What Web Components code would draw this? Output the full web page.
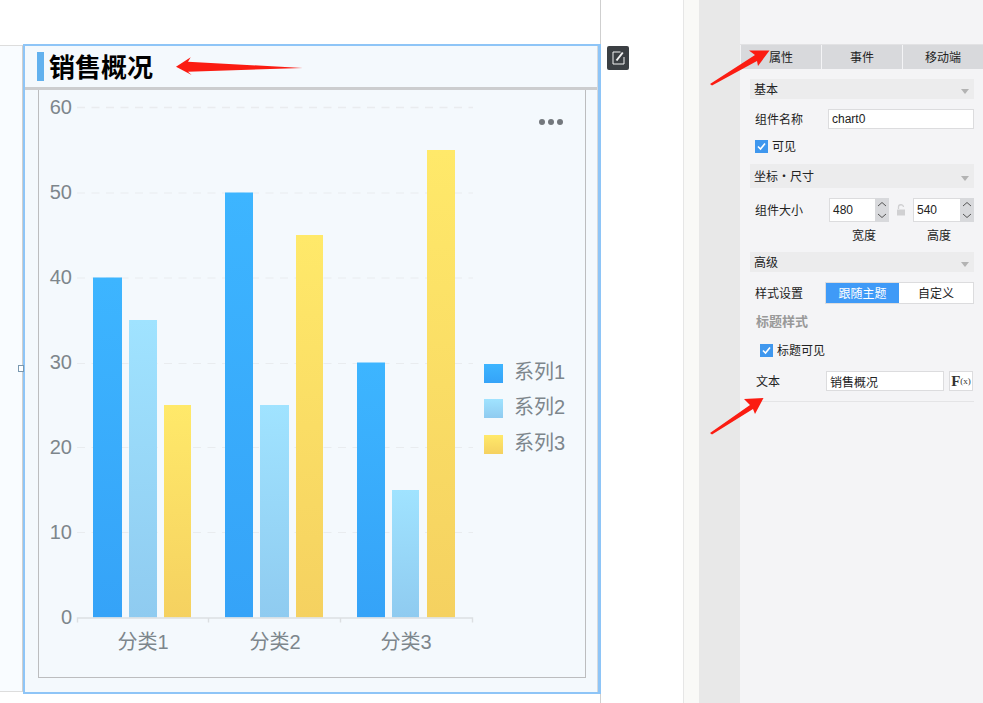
<!DOCTYPE html>
<html lang="zh">
<head>
<meta charset="utf-8">
<style>
html, body { margin: 0; height: 100%; overflow: hidden; background: #fff; }
body { font: 12px "Liberation Sans", "Noto Sans CJK SC", sans-serif; color: #222; }
</style>
</head>
<body>
<report-designer></report-designer>

<script>
const FONT = '"Liberation Sans", "Noto Sans CJK SC", sans-serif'

function tpl(html) {
    const t = document.createElement('template')
    t.innerHTML = html
    return t
}

class SimpleEl extends HTMLElement {
    connectedCallback() {
        if (this.shadowRoot) return
        this.attachShadow({ mode: 'open' })
        this.shadowRoot.appendChild(this.constructor.template.content.cloneNode(true))
        if (this.setup) this.setup()
    }
}

// the bar chart is a free canvas, so everything is placed in svg coords
class BarChart extends SimpleEl {
    static template = tpl(`
    <style>
        :host { display: block; flex: 1; min-height: 0; }
        svg { display: block; width: 100%; height: 100%; }
        text { font-family: ${FONT}; fill: #7d868c; }
    </style>
    <svg xmlns="http://www.w3.org/2000/svg"></svg>`)

    setup() {
        const W = 546, H = 587
        // origin is the inner top left of the frame (39,90)
        const ox = 39, oy = 90
        const base = 617.5
        const gy = v => base - oy - v * 8.5
        const colors = [['#3db5ff', '#35a3f8'], ['#a0e3ff', '#8fcbf0'], ['#ffe96a', '#f5d160']]
        const bars = [
            [93, 122, 40], [129, 157, 35], [164, 191, 25],
            [225, 253, 50], [260, 289, 25], [296, 323, 45],
            [357, 385, 30], [392, 419, 15], [427, 455, 55]
        ]
        let s = `<defs>`
        colors.forEach((c, i) => {
            s += `<linearGradient id="g${i}" x1="0" y1="0" x2="0" y2="1"><stop offset="0" stop-color="${c[0]}"/><stop offset="1" stop-color="${c[1]}"/></linearGradient>`
        })
        s += `</defs>`
        ;[107.5, 193, 278, 363.5, 447.5, 532.5].forEach((y, i) => {
            s += `<line x1="${77 - ox}" x2="${473 - ox}" y1="${y - oy}" y2="${y - oy}" stroke="#e9ecef" stroke-width="${i == 0 ? 1.4 : 1}" stroke-dasharray="8 6.5"/>`
        })
        for (let v = 0; v <= 60; v += 10) {
            s += `<text x="${72 - ox}" y="${gy(v) + 6}" text-anchor="end" font-size="20">${v}</text>`
        }
        bars.forEach((b, i) => {
            const y = gy(b[2])
            s += `<rect x="${b[0] - ox}" y="${y}" width="${b[1] - b[0]}" height="${base - oy - y}" fill="url(#g${i % 3})"/>`
        })
        s += `<path d="M${77.5 - ox} ${622.5 - oy}V${618 - oy}H${472.5 - ox}V${622.5 - oy}M${208.5 - ox} ${618 - oy}v4.5M${340.5 - ox} ${618 - oy}v4.5" fill="none" stroke="#dcdfe2" stroke-width="1.4"/>`
        ;[[143, '分类1'], [275, '分类2'], [406, '分类3']].forEach(c => {
            s += `<text x="${c[0] - ox}" y="${649 - oy}" text-anchor="middle" font-size="20">${c[1]}</text>`
        })
        ;[[364, '系列1'], [399, '系列2'], [435, '系列3']].forEach((l, i) => {
            s += `<rect x="${484 - ox}" y="${l[0] - oy}" width="19" height="19" fill="url(#g${i})"/>`
            s += `<text x="${514 - ox}" y="${l[0] + 15 - oy}" font-size="20">${l[1]}</text>`
        })
        ;[542, 551, 560].forEach(x => {
            s += `<circle cx="${x - ox}" cy="${122 - oy}" r="3" fill="#73787d"/>`
        })
        const svg = this.shadowRoot.querySelector('svg')
        svg.setAttribute('viewBox', `0 0 ${W} ${H}`)
        svg.innerHTML = s
    }
}
customElements.define('bar-chart', BarChart)

class ChartCard extends SimpleEl {
    static template = tpl(`
    <style>
        :host {
            display: flex; flex-direction: column; box-sizing: border-box;
            width: 578px; height: 650px;
            border: 2px solid #8ec5f7; border-right-width: 3px; background: #f4f9fd;
            position: relative;
        }
        .head {
            height: 44px; flex: none; display: flex; align-items: center; box-sizing: border-box;
            padding: 0 0 0 12px;
            border-bottom: 3px solid #cccdcf;
        }
        .mark { width: 7px; height: 29px; background: #62b1ee; margin-right: 5px; }
        h1 { margin: 0 0 2px; font: bold 26px "Noto Sans CJK SC", sans-serif; color: #000; line-height: 30px; }
        .frame {
            flex: 1; display: flex; min-height: 0;
            margin: 0 12px 14px 13px;
            border: 1px solid #bcbdbf; border-top: 0;
        }
        .right { position: absolute; right: 0; top: 0; bottom: 0; width: 1px; background: #d6dade; }
    </style>
    <div class="head"><span class="mark"></span><h1><slot></slot></h1></div>
    <div class="frame"><bar-chart></bar-chart></div>
    <span class="right"></span>`)
}
customElements.define('chart-card', ChartCard)

class EditButton extends SimpleEl {
    static template = tpl(`
    <style>
        :host {
            display: flex; align-items: center; justify-content: center;
            width: 22px; height: 24px; border-radius: 2px; background: #3b3f43;
        }
    </style>
    <svg width="13" height="14" viewBox="0 0 13 14" fill="none" stroke="#f2f2f2">
        <path d="M8.500 1H1v12h11V6" stroke-width="1"/>
        <path d="M4.500 9.500L10.800 1.500" stroke-width="2"/>
    </svg>`)
}
customElements.define('edit-button', EditButton)

class DesignCanvas extends SimpleEl {
    static template = tpl(`
    <style>
        :host {
            display: block; position: relative; box-sizing: border-box;
            width: 601px; height: 703px; flex: none;
            padding: 44px 0 0 23px;
            border-right: 1px solid #cfcfcf;
        }
        .page {
            position: absolute; left: 0; top: 45px; width: 22px; height: 645px;
            background: #f9fcff; border: 1px solid #ddd; border-left: 0;
            border-right-color: #cfcfcf;
        }
        .handle {
            position: absolute; left: 18px; top: 365px; width: 4px; height: 5px;
            border: 1px solid #7a98b0; background: #fff;
        }
        .tool { position: absolute; left: 607px; top: 46px; }
        svg.pointer { position: absolute; left: 170px; top: 50px; }
        ::slotted(*) { position: relative; }
    </style>
    <div class="page"></div>
    <slot></slot>
    <span class="handle"></span>
    <edit-button class="tool"></edit-button>
    <svg class="pointer" width="140" height="34" viewBox="0 0 140 34">
        <path d="M6 16.700L20.700 7.300L18 11.700L132.700 18L18 21.700L21.700 25Z" fill="#fb1c12"/>
    </svg>`)
}
customElements.define('design-canvas', DesignCanvas)

class TabBar extends SimpleEl {
    static template = tpl(`
    <style>
        :host { display: flex; height: 24px; border-top: 1px solid #e2e2e4; }
        span {
            flex: 1; display: flex; align-items: center; justify-content: center;
            background: #d8d9dc; color: #222; font-size: 12px;
            margin-left: 1px; padding-bottom: 1px;
        }
        span:first-child { background: #f1f1f3; margin-left: 0; flex: none; width: 82px; }
        span:nth-child(2) { flex: none; width: 80px; }
    </style>
    <span>属性</span><span>事件</span><span>移动端</span>`)
}
customElements.define('tab-bar', TabBar)

class SectionHead extends SimpleEl {
    static template = tpl(`
    <style>
        :host {
            display: flex; align-items: center; justify-content: space-between;
            height: 20px; background: #ececed; padding: 0 5px 0 4px;
            font-size: 12px; color: #222;
        }
        span { padding-bottom: 2px; }
        i { width: 0; height: 0; border: 4px solid transparent; border-top: 5px solid #b3b3b3; border-bottom: 0; margin-top: 4px; }
    </style>
    <span><slot></slot></span><i></i>`)
}
customElements.define('section-head', SectionHead)

class CheckRow extends SimpleEl {
    static template = tpl(`
    <style>
        :host { display: flex; align-items: center; gap: 4px; height: 13px; font-size: 12px; color: #222; }
        b { width: 13px; height: 13px; background: #3f97ee; display: flex; align-items: center; justify-content: center; }
        span { padding-bottom: 2px; }
    </style>
    <b><svg width="11" height="11" viewBox="0 0 11 11"><path d="M2 5.500L4.500 8L9 2.500" fill="none" stroke="#fff" stroke-width="1.600"/></svg></b>
    <span><slot></slot></span>`)
}
customElements.define('check-row', CheckRow)

class NumField extends SimpleEl {
    static template = tpl(`
    <style>
        :host { display: flex; width: 60px; height: 24px; flex: none; }
        .v {
            flex: 1; background: #fff; display: flex; align-items: center; padding-left: 3px;
            border: 1px solid #dcdcde; border-right: 0; box-sizing: border-box;
            font-size: 12px; color: #222;
        }
        .s { width: 14px; background: #d8d9dc; display: flex; flex-direction: column; align-items: center; justify-content: space-around; }
    </style>
    <div class="v"><slot></slot></div>
    <div class="s">
        <svg width="10" height="6" viewBox="0 0 10 6"><path d="M1 5L5 1.500L9 5" fill="none" stroke="#555"/></svg>
        <svg width="10" height="6" viewBox="0 0 10 6"><path d="M1 1L5 4.500L9 1" fill="none" stroke="#555"/></svg>
    </div>`)
}
customElements.define('num-field', NumField)

class PropPanel extends SimpleEl {
    static template = tpl(`
    <style>
        :host {
            display: block; flex: 1; background: #f4f4f6; padding-top: 44px;
            font-size: 12px; color: #222; position: relative;
        }
        .body { padding: 10px 9px 0 10px; }
        .row { display: flex; align-items: center; }
        .lab { width: 78px; flex: none; padding: 0 0 2px 5px; box-sizing: border-box; }
        .text {
            background: #fff; border: 1px solid #dcdcde; height: 20px; box-sizing: border-box;
            display: flex; align-items: center; padding-left: 3px;
        }
        .seg { display: flex; width: 149px; height: 22px; border: 1px solid #dcdcde; box-sizing: border-box; background: #fff; }
        .seg span { display: flex; align-items: center; justify-content: center; flex: none; padding-bottom: 1px; }
        .seg .on { width: 73px; background: #3f9af7; color: #fff; }
        .seg .off { flex: 1; }
        .fx {
            width: 24px; height: 20px; box-sizing: border-box; background: #fff; border: 1px solid #dcdcde;
            display: flex; align-items: center; justify-content: center;
            font: bold 15px "Liberation Serif", serif; color: #333;
        }
        .fx small { font-size: 9px; font-weight: normal; }
        .muted { color: #999; font-weight: bold; font-size: 13px; padding-left: 6px; }
        hr { border: 0; border-top: 1px solid #e4e4e6; margin: 10px 0 0 0; }
    </style>
    <tab-bar></tab-bar>
    <div class="body">
        <section-head>基本</section-head>
        <div class="row" style="margin-top:10px">
            <span class="lab">组件名称</span>
            <span class="text" style="width:146px">chart0</span>
        </div>
        <check-row style="margin:11px 0 0 5px">可见</check-row>
        <section-head style="margin-top:11px;height:24px">坐标・尺寸</section-head>
        <div class="row" style="margin-top:10px">
            <span class="lab" style="width:79px">组件大小</span>
            <num-field>480</num-field>
            <svg width="24" height="12" viewBox="0 0 24 12"><path d="M9.500 5V3.500a2.500 2.500 0 0 1 5-0.500" fill="none" stroke="#d0d0d2" stroke-width="1.300"/><rect x="8" y="5.500" width="8" height="6" fill="#d0d0d2"/></svg>
            <num-field style="width:61px">540</num-field>
        </div>
        <div class="row" style="margin-top:5px;height:14px">
            <span style="margin-left:102px">宽度</span>
            <span style="margin-left:51px">高度</span>
        </div>
        <section-head style="margin-top:11px">高级</section-head>
        <div class="row" style="margin-top:10px">
            <span class="lab" style="width:75px">样式设置</span>
            <div class="seg"><span class="on">跟随主题</span><span class="off">自定义</span></div>
        </div>
        <div class="muted" style="margin-top:10px;line-height:16px">标题样式</div>
        <check-row style="margin:14px 0 0 10px">标题可见</check-row>
        <div class="row" style="margin-top:14px">
            <span class="lab" style="width:76px;padding-left:6px">文本</span>
            <span class="text" style="width:118px">销售概况</span>
            <span class="fx" style="margin-left:5px">F<small>(x)</small></span>
        </div>
        <hr>
    </div>`)
}
customElements.define('prop-panel', PropPanel)

class ReportDesigner extends SimpleEl {
    static template = tpl(`
    <style>
        :host { display: flex; width: 983px; height: 703px; position: relative; overflow: hidden; }
        .gap { width: 82px; flex: none; background: #fff; }
        .strip { width: 16px; flex: none; background: #f9f9f7; border-left: 1px solid #e6e6e6; box-sizing: border-box; }
        .rail { width: 41px; flex: none; background: #e8e8e8; }
        svg.arrow { position: absolute; overflow: visible; pointer-events: none; }
    </style>
    <design-canvas><chart-card>销售概况</chart-card></design-canvas>
    <div class="gap"></div>
    <div class="strip"></div>
    <div class="rail"></div>
    <prop-panel></prop-panel>
    <svg class="arrow" style="left:0;top:0" width="983" height="703" viewBox="0 0 983 703">
        <path d="M710 84L755 55L749 50.500L769.500 50.500L758 66L757 61L712 85.500Z" fill="#fb1c12"/>
        <path d="M710 433L750 405L744 399L763.500 398L755 414L753 409L712 434.500Z" fill="#fb1c12"/>
    </svg>`)
}
customElements.define('report-designer', ReportDesigner)
</script>
</body>
</html>
